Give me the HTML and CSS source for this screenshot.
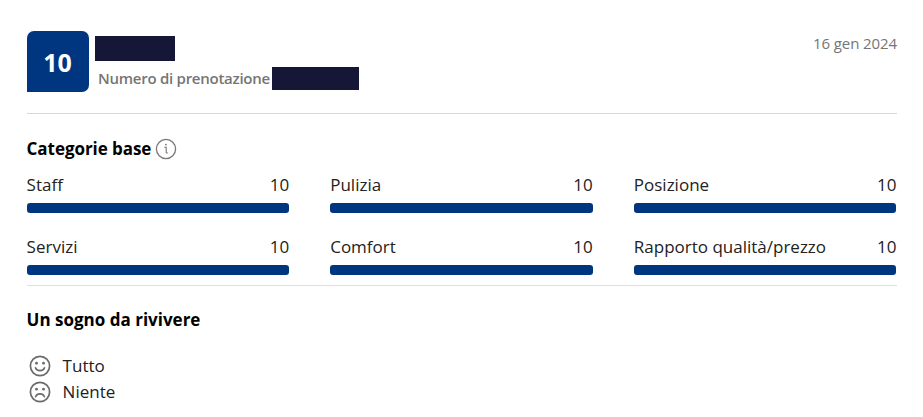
FILE: index.html
```html
<!DOCTYPE html>
<html lang="it">
<head>
<meta charset="utf-8">
<title>Recensione</title>
<link rel="stylesheet" href="styles.css">
</head>
<body>
<article class="review">
  <header class="head">
    <div class="score">10</div>
    <div class="guest">
      <div class="mask mask-name"></div>
      <div class="booking"><span class="booking-label">Numero di prenotazione</span><span class="mask mask-number"></span></div>
    </div>
    <time class="date">16 gen 2024</time>
  </header>
  <section class="categories">
    <h2 class="title title-categories"><span>Categorie base</span>
      <svg class="info" viewBox="0 0 22 22" fill="none" stroke="#777"><circle cx="11" cy="11" r="9.6" stroke-width="1.3"/><path d="M9.3 9.3h1.9v5.2q0 .8 1.6.2" stroke-width="1.1"/><circle cx="10.9" cy="6.6" r=".9" fill="#777" stroke="none"/></svg>
    </h2>
    <div class="grid">
      <div class="item"><div class="row"><span>Staff</span><span>10</span></div><div class="bar"></div></div>
      <div class="item"><div class="row"><span>Pulizia</span><span>10</span></div><div class="bar"></div></div>
      <div class="item"><div class="row"><span>Posizione</span><span>10</span></div><div class="bar"></div></div>
      <div class="item"><div class="row"><span>Servizi</span><span>10</span></div><div class="bar"></div></div>
      <div class="item"><div class="row"><span>Comfort</span><span>10</span></div><div class="bar"></div></div>
      <div class="item"><div class="row"><span>Rapporto qualità/prezzo</span><span>10</span></div><div class="bar"></div></div>
    </div>
  </section>
  <section class="comments">
    <h2 class="title title-comment">Un sogno da rivivere</h2>
    <p class="comment"><svg class="face" viewBox="0 0 22 22" fill="none" stroke="#6b6b6b" stroke-width="1.7" stroke-linecap="round"><circle cx="11" cy="11" r="9.6"/><path d="M6.5 12.8c1.2 3.8 7.8 3.8 9 0"/><g fill="#6b6b6b" stroke="none"><circle cx="7.5" cy="8.2" r="1.4"/><circle cx="14.5" cy="8.2" r="1.4"/></g></svg><span>Tutto</span></p>
    <p class="comment"><svg class="face" viewBox="0 0 22 22" fill="none" stroke="#6b6b6b" stroke-width="1.7" stroke-linecap="round"><circle cx="11" cy="11" r="9.6"/><path d="M6.7 15.6c1.2-3.7 7.4-3.7 8.6 0"/><g fill="#6b6b6b" stroke="none"><circle cx="7.5" cy="8.2" r="1.4"/><circle cx="14.5" cy="8.2" r="1.4"/></g></svg><span>Niente</span></p>
  </section>
</article>
</body>
</html>
```
FILE: styles.css
```css
* { box-sizing: border-box; }
body {
  margin: 0;
  background: #fff;
  color: #222;
  font: 17px/24px "Open Sans", "Noto Sans", sans-serif;
  font-variant-ligatures: none;
}
.review { padding: 31px 26px 0 26.6px; }
.head {
  display: flex;
  height: 83px;
  border-bottom: 1px solid #d9d9dc;
}
.score {
  width: 62px;
  height: 61.4px;
  border-radius: 7px 7px 7px 0;
  background: #003580;
  color: #fff;
  font-size: 25px;
  font-weight: 700;
  line-height: 63px;
  text-align: center;
}
.guest { margin: 5px 0 0 6.4px; }
.mask { display: block; background: #161637; }
.mask-name { width: 80px; height: 25px; }
.booking { display: flex; margin-top: 6px; }
.booking-label {
  width: 174px;
  padding-left: 3px;
  color: #757575;
  font-size: 15px;
  font-weight: 600;
  letter-spacing: -0.26px;
  line-height: 22px;
  white-space: nowrap;
}
.mask-number { width: 87px; height: 23px; margin-left: 3px; }
.date {
  margin-left: auto;
  color: #757575;
  font-size: 15px;
  letter-spacing: -0.1px;
  line-height: 25px;
}
.categories { height: 172px; padding-top: 23px; border-bottom: 1px solid #dcdce2; }
.title {
  display: flex;
  align-items: center;
  margin: 0;
  color: #000;
  font-size: 17px;
  font-weight: 700;
  line-height: 24px;
}
.title-categories { letter-spacing: -0.06px; }
.info { width: 22px; height: 22px; margin-left: 4px; }
.grid {
  display: grid;
  grid-template-columns: repeat(3, 1fr);
  gap: 20px 41px;
  margin: 12px 0.6px 0 0;
}
.item { height: 41.5px; }
.row { display: flex; justify-content: space-between; white-space: nowrap; }
.bar { height: 10px; margin-top: 6px; border-radius: 3px; background: #003580; }
.comments { padding-top: 22px; }
.title-comment { margin-bottom: 21px; }
.comment { display: flex; align-items: center; height: 26px; margin: 0; padding-left: 2px; }
.face { width: 22px; height: 22px; margin-right: 12px; }
```
